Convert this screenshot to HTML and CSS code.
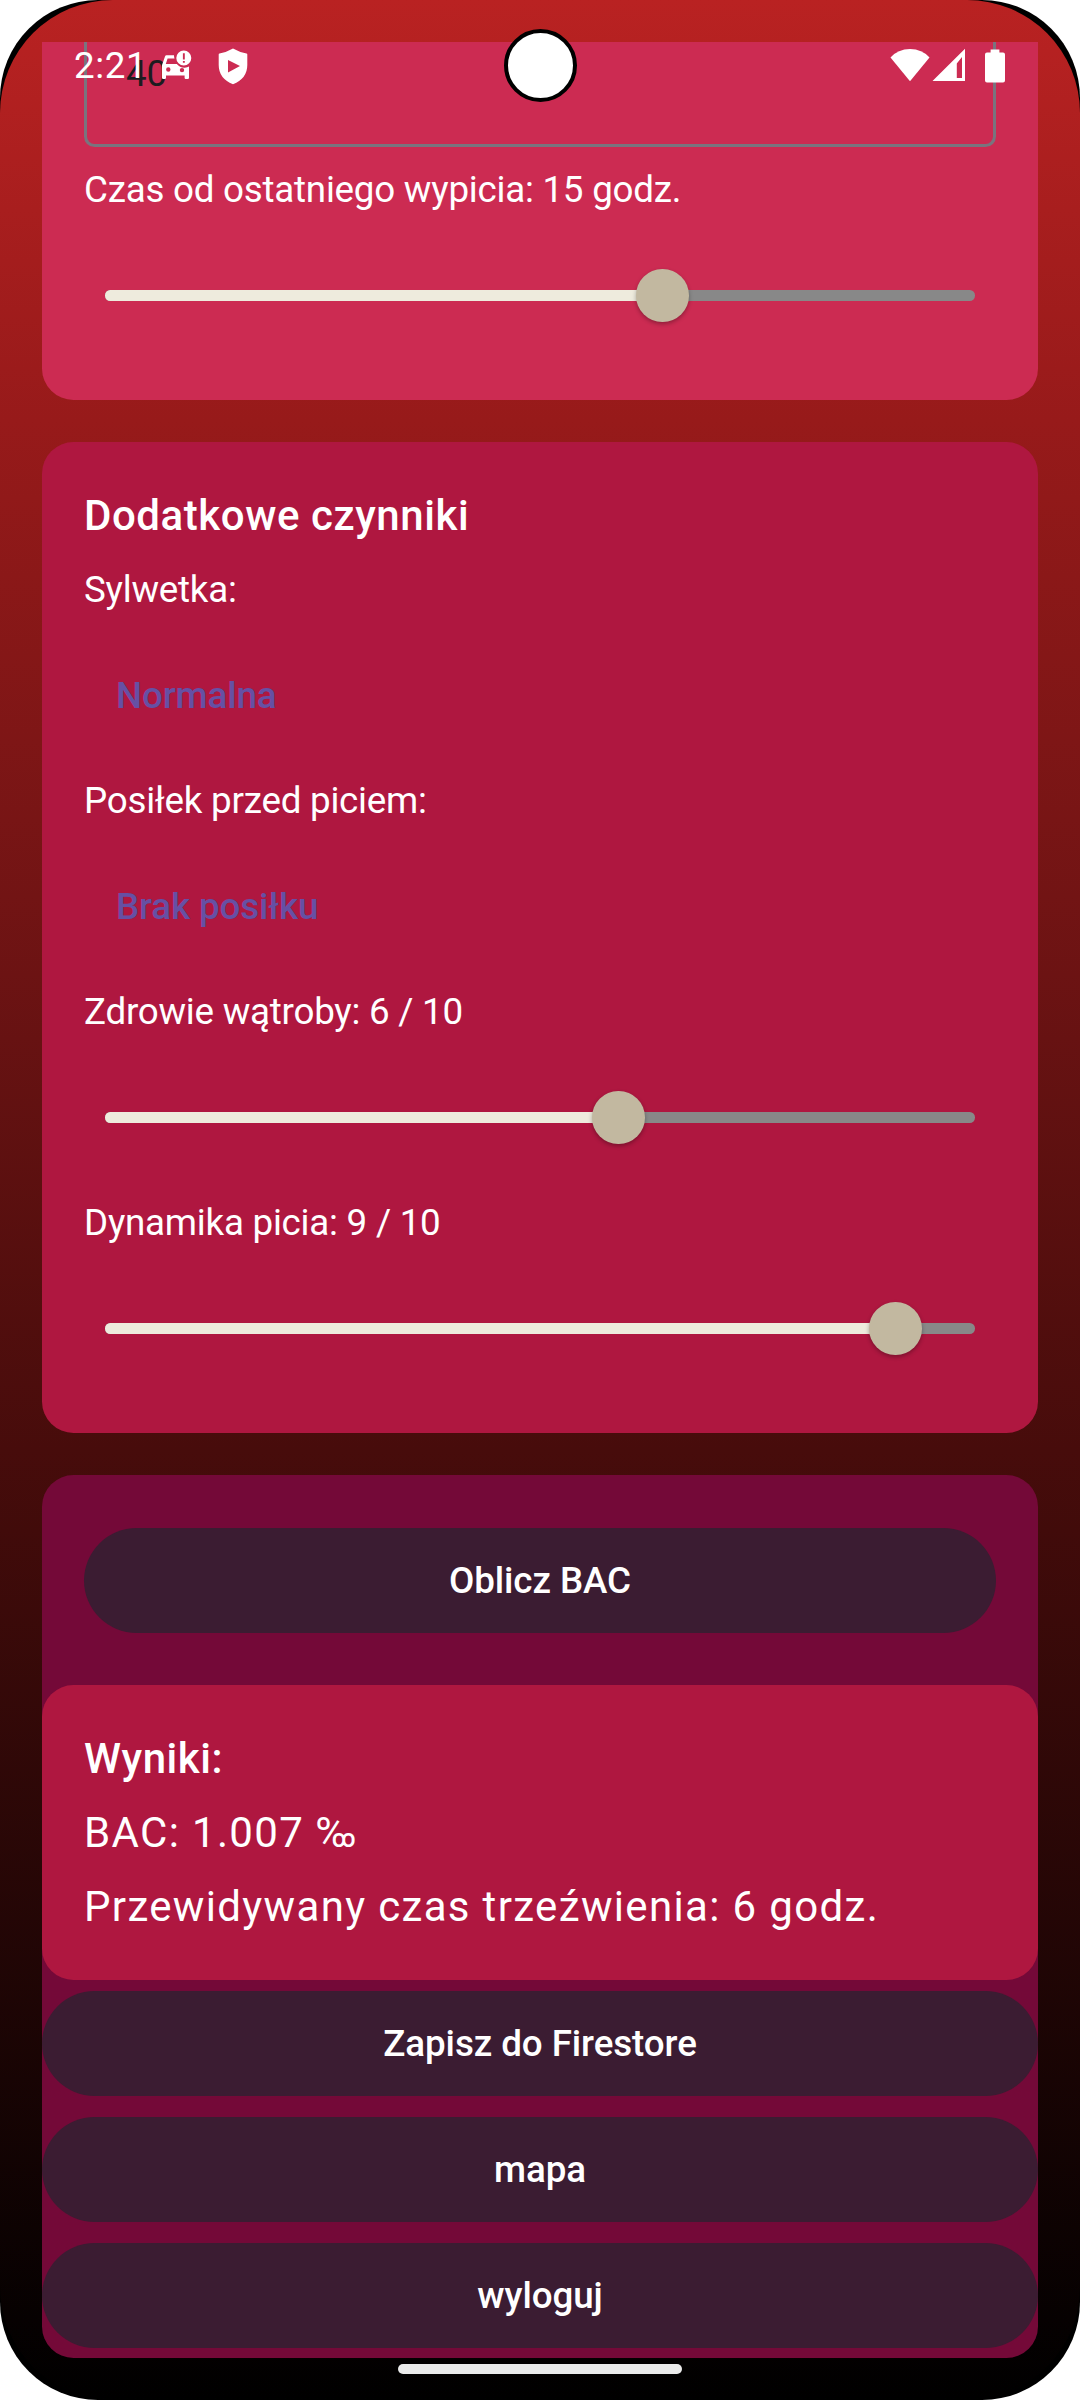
FILE: index.html
```html
<!DOCTYPE html>
<html lang="pl">
<head>
<meta charset="utf-8">
<title>Kalkulator BAC</title>
<link rel="stylesheet" href="styles.css">
</head>
<body>
<div class="device">
  <div class="screen">
    <main class="content">
      <section class="card card-drink">
        <div class="field">40</div>
        <label class="label">Czas od ostatniego wypicia: 15 godz.</label>
        <div class="slider"><div class="track"><div class="fill" style="width:557.7px"></div></div><div class="thumb" style="left:552.3px"></div></div>
      </section>
      <section class="card card-factors">
        <h2 class="title">Dodatkowe czynniki</h2>
        <label class="label">Sylwetka:</label>
        <div class="choice">Normalna</div>
        <label class="label">Posiłek przed piciem:</label>
        <div class="choice">Brak posiłku</div>
        <label class="label">Zdrowie wątroby: 6 / 10</label>
        <div class="slider"><div class="track"><div class="fill" style="width:513.5px"></div></div><div class="thumb" style="left:508px"></div></div>
        <label class="label">Dynamika picia: 9 / 10</label>
        <div class="slider"><div class="track"><div class="fill" style="width:790.4px"></div></div><div class="thumb" style="left:785px"></div></div>
      </section>
      <section class="actions">
        <button class="button button-calc">Oblicz BAC</button>
        <div class="results">
          <h2 class="title">Wyniki:</h2>
          <p class="result">BAC: 1.007 ‰</p>
          <p class="result">Przewidywany czas trzeźwienia: 6 godz.</p>
        </div>
        <button class="button">Zapisz do Firestore</button>
        <button class="button">mapa</button>
        <button class="button">wyloguj</button>
      </section>
    </main>
  </div>
  <header class="status">
    <span class="clock">2:21</span>
    <svg class="icon-car" width="32" height="36" viewBox="0 0 32 36">
      <path fill="#fff" fill-rule="evenodd" d="M6.500 9.200h7.500q0 1.900.5 3.300H7.600l-1.800 5.500h11q3 3.900 8 3.700 2.400-.1 4.200-1.200v11.300q0 1.200-1.200 1.200h-2q-1.200 0-1.200-1.200V29.500H6v2.300Q6 33 4.800 33H3.200Q2 33 2 31.800V19L5 10.500Q5.400 9.200 6.500 9.200zM8.300 21.300a2.200 2.200 0 1 0 0 4.400 2.200 2.200 0 0 0 0-4.400zM22 21.900a2.200 2.200 0 1 0 0 4.400 2.200 2.200 0 0 0 0-4.400z"/>
      <path fill="#fff" fill-rule="evenodd" d="M23.800 4.500a7.500 7.500 0 1 0 0 15 7.500 7.500 0 0 0 0-15zM22.900 7.300h1.900v6.200h-1.900zM22.900 14.900h1.900v1.900h-1.900z"/>
    </svg>
    <svg class="icon-shield" width="30" height="37" viewBox="0 0 30 37">
      <path fill="#fff" fill-rule="evenodd" d="M15 .5Q21 4 28.500 5.500q.8.200.8 1V17q0 13.500-14.300 19.200Q.7 30.500.7 17V6.500q0-.8.800-1Q9 4 15 .5zM10 12v12.500L22 18z"/>
    </svg>
    <div class="indicators">
      <svg width="40" height="34" viewBox="0 0 40 34"><path fill="#fff" d="M20 33.300L.5 9.500Q8 1 20 1t19.500 8.500z"/></svg>
      <svg class="icon-signal" width="34" height="34" viewBox="0 0 34 34"><path fill="#fff" fill-rule="evenodd" d="M33 .7V33H.5zM30 9l-5.200 6.500V30H30z"/></svg>
      <svg class="icon-battery" width="20" height="34" viewBox="0 0 20 34"><path fill="#fff" d="M5.600.5h8.800v3H18q2 0 2 2v26q0 2-2 2H2q-2 0-2-2v-26q0-2 2-2h3.600z"/></svg>
    </div>
  </header>
  <div class="camera"></div>
  <div class="handle"></div>
</div>
</body>
</html>
```
FILE: styles.css
```css
* { box-sizing: border-box; }
body { margin: 0; background: #fff; font-family: Roboto, "Noto Sans", sans-serif; color: #fff; }
.device { position: relative; width: 1080px; height: 2400px; background: #000; border-radius: 98px; overflow: hidden; }
.screen { height: 2400px; padding-top: 42px; border-radius: 113px; background: linear-gradient(#b92222 0, #971a1a 420px, #6c1313 975px, #470c0b 1450px, #000 2400px); }
.content { display: flex; flex-direction: column; gap: 42px; padding: 0 42px; }
.card { display: flex; flex-direction: column; gap: 21px; padding: 42px; border-radius: 31.5px; }
.card-drink { background: #cc2b52; padding-top: 0; border-top-left-radius: 0; border-top-right-radius: 0; }
.card-factors, .results { background: #af1740; }
.field { height: 105px; padding-left: 39px; border: 3px solid #79747e; border-top: 0; border-radius: 0 0 10.5px 10.5px; color: #1c1b1f; font-size: 36.75px; line-height: 63px; letter-spacing: -0.24px; }
.title, .result { margin: 0; height: 63px; line-height: 63px; font-size: 42px; }
.title { font-weight: 500; letter-spacing: 0.56px; }
.result { font-weight: 400; letter-spacing: 1.34px; }
.label { height: 43px; line-height: 43px; font-size: 36.75px; letter-spacing: -0.24px; }
.choice { height: 126px; padding-left: 32px; line-height: 128px; font-size: 36.75px; font-weight: 500; letter-spacing: -0.12px; color: #6650a4; }
.slider { position: relative; height: 126px; padding: 58px 21.500px 57px 21px; }
.track { height: 10.5px; border-radius: 5.25px; background: #888; overflow: hidden; }
.fill { height: 100%; background: #eeebdd; }
.thumb { position: absolute; top: 37px; width: 52.5px; height: 52.5px; border-radius: 50%; background: #c2b8a0; box-shadow: 0 2px 4px rgba(0, 0, 0, .3); }
.actions { display: flex; flex-direction: column; gap: 21px; padding: 53px 0 10px; border-radius: 31.5px; background: #740938; }
.button { height: 105px; border: 0; border-radius: 53px; background: #3b1c32; color: #fff; font: 500 36.75px/105px Roboto, sans-serif; letter-spacing: -0.08px; padding: 0; }
.button-calc { margin: 0 42px 31px; }
.results { display: flex; flex-direction: column; gap: 11px; height: 295px; margin-bottom: -10px; padding: 42px; border-radius: 31.5px; }
.status { position: absolute; top: 48px; left: 74px; right: 75px; height: 38px; display: flex; align-items: flex-start; }
.clock { width: 86px; font-size: 36.75px; line-height: 36px; letter-spacing: 0.6px; }
.icon-car { margin-top: -2px; }
.icon-shield { margin-left: 26px; }
.indicators { display: flex; margin-left: auto; }
.icon-signal { margin-left: 2px; }
.icon-battery { margin: 1px 0 0 19px; }
.camera { position: absolute; left: 503.5px; top: 29px; width: 73px; height: 73px; border: 4.5px solid #000; border-radius: 50%; background: #fff; }
.handle { position: absolute; left: 398px; top: 2364px; width: 284px; height: 10px; border-radius: 5px; background: #ebebeb; }
```
